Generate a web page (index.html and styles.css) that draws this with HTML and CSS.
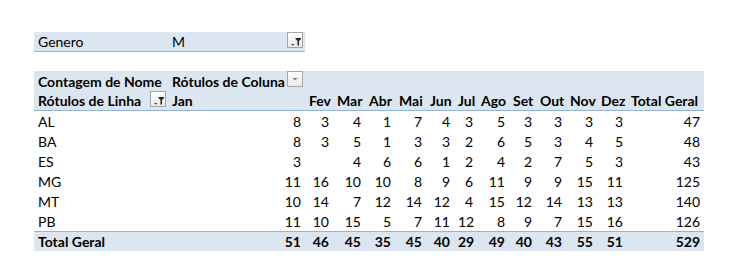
FILE: index.html
```html
<!DOCTYPE html>
<html lang="pt">
<head>
<meta charset="utf-8">
<link rel="stylesheet" href="styles.css">
</head>
<body>
<div class="sheet">
  <table class="filter">
    <colgroup><col class="c-a"><col class="c-jan"></colgroup>
    <tr>
      <td>Genero</td>
      <td class="with-btn">M
        <span class="btn"><svg width="14" height="14" viewBox="0 0 14 14"><path d="M3 11h3.5l-1.75 1.8z" fill="#444"/><path d="M7.5 5h5.5v1l-2 2v4.5h-1.5v-4.5l-2-2z" fill="#222"/></svg></span>
      </td>
    </tr>
  </table>

  <table class="pivot">
    <colgroup>
      <col class="c-a"><col class="c-jan"><col class="c-28"><col class="c-32"><col class="c-30"><col class="c-31"><col class="c-28"><col class="c-23"><col class="c-32"><col class="c-27"><col class="c-30"><col class="c-31"><col class="c-30"><col class="c-tot">
    </colgroup>
    <thead>
      <tr class="h1">
        <th>Contagem de Nome</th>
        <th class="with-btn">Rótulos de Coluna
          <span class="btn"><svg width="14" height="14" viewBox="0 0 14 14"><path d="M4.5 6h5l-2.5 2.5z" fill="#7a7a7a"/></svg></span>
        </th>
        <th colspan="12"></th>
      </tr>
      <tr class="h2">
        <th class="with-btn">Rótulos de Linha
          <span class="btn"><svg width="14" height="14" viewBox="0 0 14 14"><path d="M3 11h3.5l-1.75 1.8z" fill="#444"/><path d="M7.5 5h5.5v1l-2 2v4.5h-1.5v-4.5l-2-2z" fill="#222"/></svg></span>
        </th>
        <th>Jan</th><th>Fev</th><th>Mar</th><th>Abr</th><th>Mai</th><th>Jun</th><th>Jul</th><th>Ago</th><th>Set</th><th>Out</th><th>Nov</th><th>Dez</th><th>Total Geral</th>
      </tr>
    </thead>
    <tbody>
      <tr><td>AL</td><td>8</td><td>3</td><td>4</td><td>1</td><td>7</td><td>4</td><td>3</td><td>5</td><td>3</td><td>3</td><td>3</td><td>3</td><td>47</td></tr>
      <tr><td>BA</td><td>8</td><td>3</td><td>5</td><td>1</td><td>3</td><td>3</td><td>2</td><td>6</td><td>5</td><td>3</td><td>4</td><td>5</td><td>48</td></tr>
      <tr><td>ES</td><td>3</td><td></td><td>4</td><td>6</td><td>6</td><td>1</td><td>2</td><td>4</td><td>2</td><td>7</td><td>5</td><td>3</td><td>43</td></tr>
      <tr><td>MG</td><td>11</td><td>16</td><td>10</td><td>10</td><td>8</td><td>9</td><td>6</td><td>11</td><td>9</td><td>9</td><td>15</td><td>11</td><td>125</td></tr>
      <tr><td>MT</td><td>10</td><td>14</td><td>7</td><td>12</td><td>14</td><td>12</td><td>4</td><td>15</td><td>12</td><td>14</td><td>13</td><td>13</td><td>140</td></tr>
      <tr><td>PB</td><td>11</td><td>10</td><td>15</td><td>5</td><td>7</td><td>11</td><td>12</td><td>8</td><td>9</td><td>7</td><td>15</td><td>16</td><td>126</td></tr>
    </tbody>
    <tfoot>
      <tr><td>Total Geral</td><td>51</td><td>46</td><td>45</td><td>35</td><td>45</td><td>40</td><td>29</td><td>49</td><td>40</td><td>43</td><td>55</td><td>51</td><td>529</td></tr>
    </tfoot>
  </table>
</div>
</body>
</html>
```

FILE: styles.css
```css
html, body {
  margin: 0;
  padding: 0;
  background: #fff;
}
.sheet {
  padding: 32px 0 0 34px;
  font-family: Lato, "Liberation Sans", sans-serif;
  font-size: 14px;
  color: #000;
}
table {
  border-collapse: separate;
  border-spacing: 0;
  table-layout: fixed;
}
td, th {
  box-sizing: border-box;
  height: 20px;
  padding: 0 3px 1px 4px;
  vertical-align: bottom;
  white-space: nowrap;
  overflow: visible;
  line-height: 16px;
  text-align: left;
}
.c-a { width: 134px; }
.c-jan { width: 137px; }
.c-23 { width: 23px; }
.c-27 { width: 27px; }
.c-28 { width: 28px; }
.c-30 { width: 30px; }
.c-31 { width: 31px; }
.c-32 { width: 32px; }
.c-tot { width: 77px; }

.filter {
  width: 271px;
  background: #dce6f1;
}
.filter td {
  border-bottom: 1px solid #95b3d7;
}
.pivot {
  width: 670px;
  margin-top: 19px;
}
.pivot thead th {
  background: #dce6f1;
  font-weight: bold;
}
.pivot thead .h2 th {
  border-bottom: 1px solid #95b3d7;
}
.pivot tbody td,
.pivot tfoot td {
  text-align: right;
  padding-right: 4px;
}
.pivot tbody td:first-child,
.pivot tfoot td:first-child {
  text-align: left;
}
.pivot tfoot td {
  background: #dce6f1;
  font-weight: bold;
  border-top: 1px solid #95b3d7;
}
.with-btn {
  position: relative;
}
.btn {
  position: absolute;
  right: 2px;
  top: 0;
  width: 16px;
  height: 16px;
  box-sizing: border-box;
  border: 1px solid #a6a6a6;
  background: linear-gradient(#ffffff, #e9e9e9);
  display: flex;
  align-items: center;
  justify-content: center;
}
.btn svg {
  display: block;
}
```
